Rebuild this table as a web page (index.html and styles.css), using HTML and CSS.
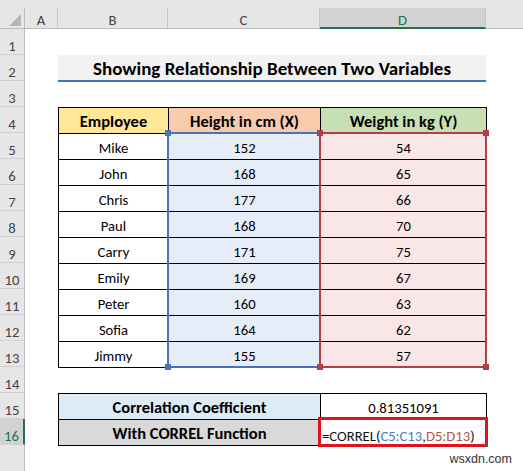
FILE: index.html
```html
<!DOCTYPE html>
<html>
<head>
<meta charset="utf-8">
<link rel="stylesheet" href="styles.css">
</head>
<body>
<div class="sheet">
  <div class="hdr-band"></div>
  <div class="corner"><span class="tri"></span></div>
  <div class="colh c-a">A</div>
  <div class="colh c-b">B</div>
  <div class="colh c-c">C</div>
  <div class="colh c-d active-col">D</div>
  <div class="colh c-e"></div>

  <div class="rowh r1">1</div>
  <div class="rowh r2">2</div>
  <div class="rowh r3">3</div>
  <div class="rowh r4">4</div>
  <div class="rowh r5">5</div>
  <div class="rowh r6">6</div>
  <div class="rowh r7">7</div>
  <div class="rowh r8">8</div>
  <div class="rowh r9">9</div>
  <div class="rowh r10">10</div>
  <div class="rowh r11">11</div>
  <div class="rowh r12">12</div>
  <div class="rowh r13">13</div>
  <div class="rowh r14">14</div>
  <div class="rowh r15">15</div>
  <div class="rowh r16 active-row">16</div>
  <div class="rowh r17 blank"></div>

  <div class="title">Showing Relationship Between Two Variables</div>

  <div class="cell th b r4 first-col th-emp">Employee</div>
  <div class="cell th c r4 th-h">Height in cm (X)</div>
  <div class="cell th d r4 last-col th-w">Weight in kg (Y)</div>

  <div class="cell b r5 first-col">Mike</div><div class="cell c r5 hc">152</div><div class="cell d r5 last-col wc">54</div>
  <div class="cell b r6 first-col">John</div><div class="cell c r6 hc">168</div><div class="cell d r6 last-col wc">65</div>
  <div class="cell b r7 first-col">Chris</div><div class="cell c r7 hc">177</div><div class="cell d r7 last-col wc">66</div>
  <div class="cell b r8 first-col">Paul</div><div class="cell c r8 hc">168</div><div class="cell d r8 last-col wc">70</div>
  <div class="cell b r9 first-col">Carry</div><div class="cell c r9 hc">171</div><div class="cell d r9 last-col wc">75</div>
  <div class="cell b r10 first-col">Emily</div><div class="cell c r10 hc">169</div><div class="cell d r10 last-col wc">67</div>
  <div class="cell b r11 first-col">Peter</div><div class="cell c r11 hc">160</div><div class="cell d r11 last-col wc">63</div>
  <div class="cell b r12 first-col">Sofia</div><div class="cell c r12 hc">164</div><div class="cell d r12 last-col wc">62</div>
  <div class="cell b r13 first-col last-row">Jimmy</div><div class="cell c r13 hc last-row">155</div><div class="cell d r13 last-col wc last-row">57</div>

  <div class="range range-c"><span class="hd tl"></span><span class="hd bl"></span></div>
  <div class="range range-d"><span class="hd tl"></span><span class="hd tr"></span><span class="hd bl"></span><span class="hd br"></span></div>

  <div class="cell bc r15 first-col th lbl-blue">Correlation Coefficient</div>
  <div class="cell d r15 last-col">0.81351091</div>
  <div class="cell bc r16 first-col th lbl-gray last-row">With CORREL Function</div>
  <div class="cell d r16 last-col last-row formula">=CORREL(<span class="ref-c">C5:C13</span>,<span class="ref-d">D5:D13</span>)<span class="fill-handle"></span></div>

  <div class="watermark">wsxdn.com</div>
</div>
</body>
</html>
```

FILE: styles.css
```css
html, body {
  margin: 0;
  padding: 0;
  background: #ffffff;
}
body {
  width: 523px;
  height: 471px;
  overflow: hidden;
  font-family: Carlito, Lato, "Liberation Sans", sans-serif;
}
.sheet {
  display: grid;
  grid-template-columns: 25px 33px 110px 152px 166px 1fr;
  grid-template-rows: 29px repeat(16, 26px) 1fr;
  width: 523px;
  height: 471px;
  background: #ffffff;
}
.hdr-band {
  grid-column: 1 / -1;
  grid-row: 1;
  background: #e6e6e6;
  border-bottom: 1px solid #bcbcbc;
}
.corner {
  grid-column: 1;
  grid-row: 1;
  align-self: end;
  height: 21px;
  border-right: 1px solid #bcbcbc;
  box-sizing: border-box;
  position: relative;
}
.tri {
  position: absolute;
  right: 3px;
  bottom: 3px;
  width: 0;
  height: 0;
  border-left: 12px solid transparent;
  border-bottom: 12px solid #b5b5b5;
}
.colh {
  grid-row: 1;
  align-self: end;
  height: 21px;
  box-sizing: border-box;
  border-right: 1px solid #c6c6c6;
  border-bottom: 1px solid #bcbcbc;
  display: flex;
  align-items: center;
  justify-content: center;
  padding-top: 4px;
  font-size: 14.67px;
  color: #444444;
}
.c-a { grid-column: 2; }
.c-b { grid-column: 3; }
.c-c { grid-column: 4; }
.c-d { grid-column: 5; }
.c-e { grid-column: 6; border-right: none; }
.active-col {
  background: #d2d2d2;
  color: #217346;
  border-bottom: 2px solid #217346;
}
.rowh {
  grid-column: 1;
  background: #e6e6e6;
  border-right: 1px solid #bcbcbc;
  border-bottom: 1px solid #d0d0d0;
  box-sizing: border-box;
  display: flex;
  align-items: center;
  justify-content: center;
  padding-top: 8px;
  font-size: 14.67px;
  color: #444444;
}
.rowh.blank { border-bottom: none; }
.active-row {
  background: #d2d2d2;
  color: #217346;
  border-right: 2px solid #217346;
}
.r1 { grid-row: 2; }
.r2 { grid-row: 3; }
.r3 { grid-row: 4; }
.r4 { grid-row: 5; }
.r5 { grid-row: 6; }
.r6 { grid-row: 7; }
.r7 { grid-row: 8; }
.r8 { grid-row: 9; }
.r9 { grid-row: 10; }
.r10 { grid-row: 11; }
.r11 { grid-row: 12; }
.r12 { grid-row: 13; }
.r13 { grid-row: 14; }
.r14 { grid-row: 15; }
.r15 { grid-row: 16; }
.r16 { grid-row: 17; }
.r17 { grid-row: 18; }

.title {
  grid-column: 3 / 6;
  grid-row: 3;
  background: #f2f2f2;
  border-bottom: 2px solid #4472c4;
  margin-bottom: -1px;
  display: flex;
  align-items: center;
  justify-content: center;
  padding-top: 2px;
  font-weight: 700;
  font-size: 19px;
  color: #000000;
}

.cell {
  box-sizing: border-box;
  border-top: 1px solid #000000;
  border-left: 1px solid #000000;
  display: flex;
  align-items: center;
  justify-content: center;
  padding-top: 3px;
  font-size: 14.67px;
  color: #000000;
  background: #ffffff;
}
.b { grid-column: 3; }
.c { grid-column: 4; }
.d { grid-column: 5; }
.bc { grid-column: 3 / 5; }
.last-col {
  border-right: 1px solid #000000;
  margin-right: -1px;
}
.last-row {
  border-bottom: 1px solid #000000;
  margin-bottom: -1px;
}
.th {
  font-weight: 700;
  font-size: 16.5px;
  padding-top: 0;
  color: #000000;
}
.th-emp { background: #ffe699; }
.th-h { background: #f8cbad; }
.th-w { background: #c6e0b4; }
.hc { background: #e6edf8; }
.wc { background: #f9e6e6; }
.lbl-blue { background: #ddebf7; }
.lbl-gray { background: #d9d9d9; }

.range {
  grid-row: 6 / 15;
  box-sizing: border-box;
  margin: -1px;
  position: relative;
  pointer-events: none;
}
.range-c {
  grid-column: 4;
  border: 2px solid #4a72b8;
}
.range-d {
  grid-column: 5;
  border: 2px solid #b43f49;
}
.hd {
  position: absolute;
  width: 6px;
  height: 6px;
}
.range-c .hd { background: #4a72b8; }
.range-d .hd { background: #b43f49; }
.hd.tl { left: -4px; top: -4px; }
.hd.tr { right: -4px; top: -4px; }
.hd.bl { left: -4px; bottom: -4px; }
.hd.br { right: -4px; bottom: -4px; }

.formula {
  justify-content: flex-start;
  margin: -2px -2px -2px -2px;
  border: 3px solid #e0121b;
  padding-left: 1px;
  padding-top: 7px;
  position: relative;
  color: #111111;
}
.ref-c { color: #4a7ebb; }
.ref-d { color: #c0504d; }
.fill-handle {
  position: absolute;
  right: -3px;
  bottom: -3px;
  width: 3px;
  height: 3px;
  background: #217346;
}

.watermark {
  grid-column: 5 / 7;
  grid-row: 18;
  justify-self: end;
  align-self: center;
  margin-right: 11px;
  padding-top: 2px;
  font-family: "Liberation Sans", sans-serif;
  font-size: 12.5px;
  color: #333333;
}
```
